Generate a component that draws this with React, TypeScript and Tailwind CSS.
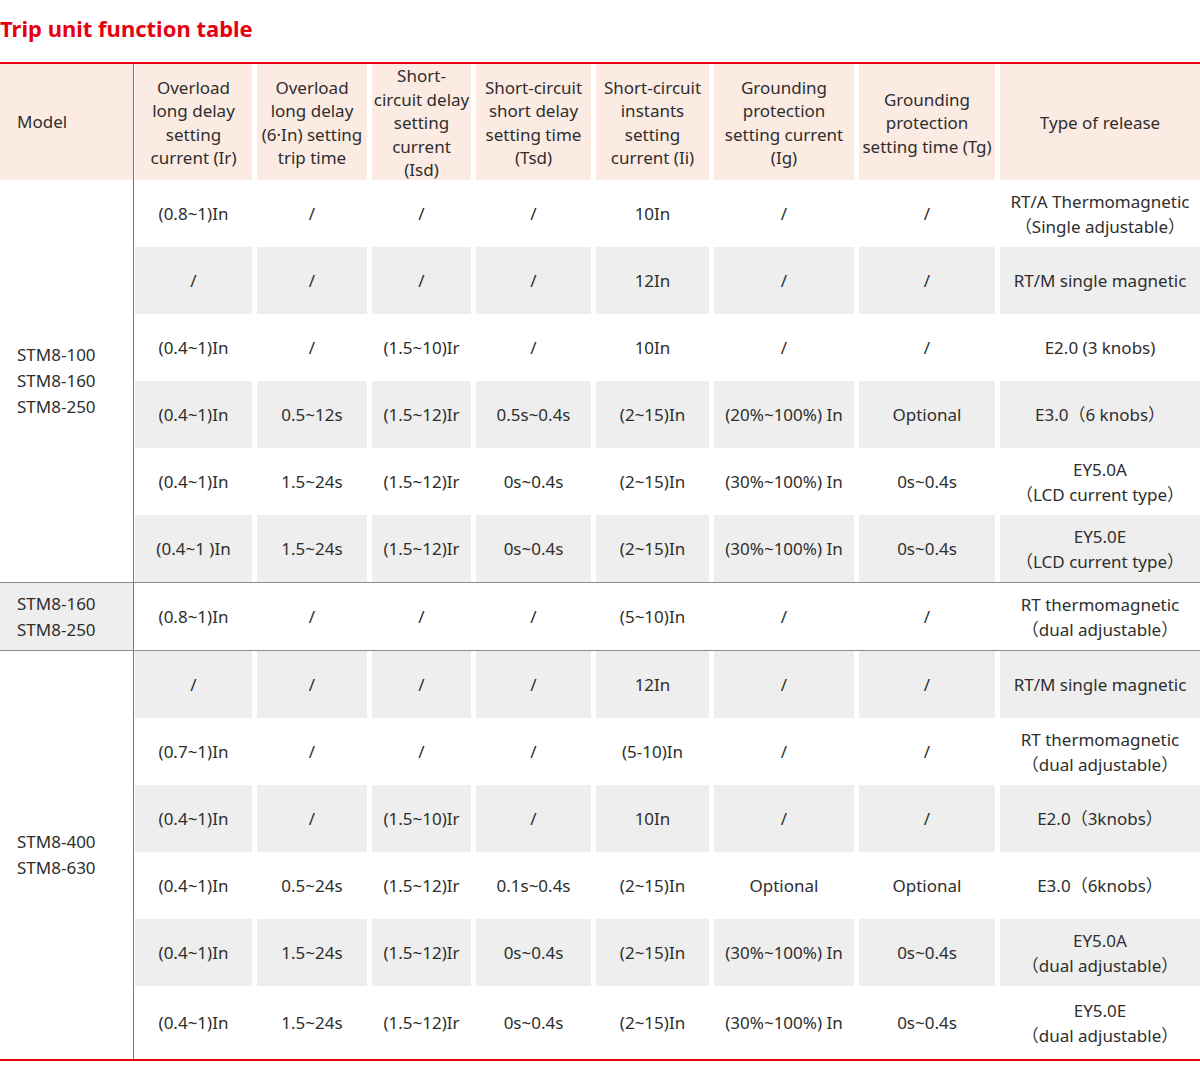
const FONT = "font-['Noto_Sans','Noto_Sans_CJK_SC',sans-serif]";

type Row = { cells: string[]; gray: boolean; tall?: boolean };

const headers = [
  "Overload\nlong delay\nsetting\ncurrent (Ir)",
  "Overload\nlong delay\n(6·In) setting\ntrip time",
  "Short-\ncircuit delay\nsetting\ncurrent\n(Isd)",
  "Short-circuit\nshort delay\nsetting time\n(Tsd)",
  "Short-circuit\ninstants\nsetting\ncurrent (Ii)",
  "Grounding\nprotection\nsetting current\n(Ig)",
  "Grounding\nprotection\nsetting time (Tg)",
  "Type of release",
];

const groups: { models: string[]; modelGray: boolean; rows: Row[] }[] = [
  {
    models: ["STM8-100", "STM8-160", "STM8-250"],
    modelGray: false,
    rows: [
      { gray: false, cells: ["(0.8~1)In", "/", "/", "/", "10In", "/", "/", "RT/A Thermomagnetic\n（Single adjustable）"] },
      { gray: true, cells: ["/", "/", "/", "/", "12In", "/", "/", "RT/M single magnetic"] },
      { gray: false, cells: ["(0.4~1)In", "/", "(1.5~10)Ir", "/", "10In", "/", "/", "E2.0 (3 knobs)"] },
      { gray: true, cells: ["(0.4~1)In", "0.5~12s", "(1.5~12)Ir", "0.5s~0.4s", "(2~15)In", "(20%~100%) In", "Optional", "E3.0（6 knobs）"] },
      { gray: false, cells: ["(0.4~1)In", "1.5~24s", "(1.5~12)Ir", "0s~0.4s", "(2~15)In", "(30%~100%) In", "0s~0.4s", "EY5.0A\n（LCD current type）"] },
      { gray: true, cells: ["(0.4~1 )In", "1.5~24s", "(1.5~12)Ir", "0s~0.4s", "(2~15)In", "(30%~100%) In", "0s~0.4s", "EY5.0E\n（LCD current type）"] },
    ],
  },
  {
    models: ["STM8-160", "STM8-250"],
    modelGray: true,
    rows: [
      { gray: false, cells: ["(0.8~1)In", "/", "/", "/", "(5~10)In", "/", "/", "RT thermomagnetic\n（dual adjustable）"] },
    ],
  },
  {
    models: ["STM8-400", "STM8-630"],
    modelGray: false,
    rows: [
      { gray: true, cells: ["/", "/", "/", "/", "12In", "/", "/", "RT/M single magnetic"] },
      { gray: false, cells: ["(0.7~1)In", "/", "/", "/", "(5-10)In", "/", "/", "RT thermomagnetic\n（dual adjustable）"] },
      { gray: true, cells: ["(0.4~1)In", "/", "(1.5~10)Ir", "/", "10In", "/", "/", "E2.0（3knobs）"] },
      { gray: false, cells: ["(0.4~1)In", "0.5~24s", "(1.5~12)Ir", "0.1s~0.4s", "(2~15)In", "Optional", "Optional", "E3.0（6knobs）"] },
      { gray: true, cells: ["(0.4~1)In", "1.5~24s", "(1.5~12)Ir", "0s~0.4s", "(2~15)In", "(30%~100%) In", "0s~0.4s", "EY5.0A\n（dual adjustable）"] },
      { gray: false, tall: true, cells: ["(0.4~1)In", "1.5~24s", "(1.5~12)Ir", "0s~0.4s", "(2~15)In", "(30%~100%) In", "0s~0.4s", "EY5.0E\n（dual adjustable）"] },
    ],
  },
];

const DataRow = ({ row }: { row: Row }) => (
  <div
    className={`grid grid-cols-[117px_110px_99px_115px_113px_140px_136px_200px] gap-x-[5px] ${
      row.tall ? "h-[73px]" : "h-[67px]"
    }`}
  >
    {row.cells.map((c, i) => (
      <div
        key={i}
        className={`flex items-center justify-center text-center whitespace-pre-line leading-[25px] ${
          row.gray ? "bg-[#eeeeee]" : "bg-white"
        }`}
      >
        {c}
      </div>
    ))}
  </div>
);

export default function App() {
  return (
    <div className={`w-[1200px] h-[1082px] bg-white text-[#2e2e2e] text-[17px] ${FONT}`}>
      <div className="h-[62px] pt-[12px]">
        <h2 className="text-[22px] leading-[32px] font-bold text-[#e60012]">Trip unit function table</h2>
      </div>
      <div className="h-[2px] bg-[#e60012]" />

      {/* header */}
      <div className="flex h-[116px]">
        <div className="w-[133px] bg-[#fcebe2] flex items-center pl-[17px]">Model</div>
        <div className="w-px bg-[#777]" />
        <div className="ml-[1px] grid grid-cols-[117px_110px_99px_115px_113px_140px_136px_200px] gap-x-[5px]">
          {headers.map((h, i) => (
            <div
              key={i}
              className="bg-[#fcebe2] flex items-center justify-center text-center whitespace-pre-line leading-[23.5px]"
            >
              {h}
            </div>
          ))}
        </div>
      </div>

      {groups.map((g, gi) => (
        <div key={gi}>
          {gi > 0 && <div className="h-px bg-[#8c8c8c]" />}
          <div className="flex">
            <div
              className={`w-[133px] flex flex-col justify-center pl-[17px] leading-[26px] ${
                g.modelGray ? "bg-[#eeeeee]" : "bg-white"
              }`}
            >
              {g.models.map((m) => (
                <div key={m}>{m}</div>
              ))}
            </div>
            <div className="w-px bg-[#777]" />
            <div className="ml-[1px] flex flex-col">
              {g.rows.map((r, ri) => (
                <DataRow key={ri} row={r} />
              ))}
            </div>
          </div>
        </div>
      ))}
      <div className="h-[2px] bg-[#e60012]" />
    </div>
  );
}
